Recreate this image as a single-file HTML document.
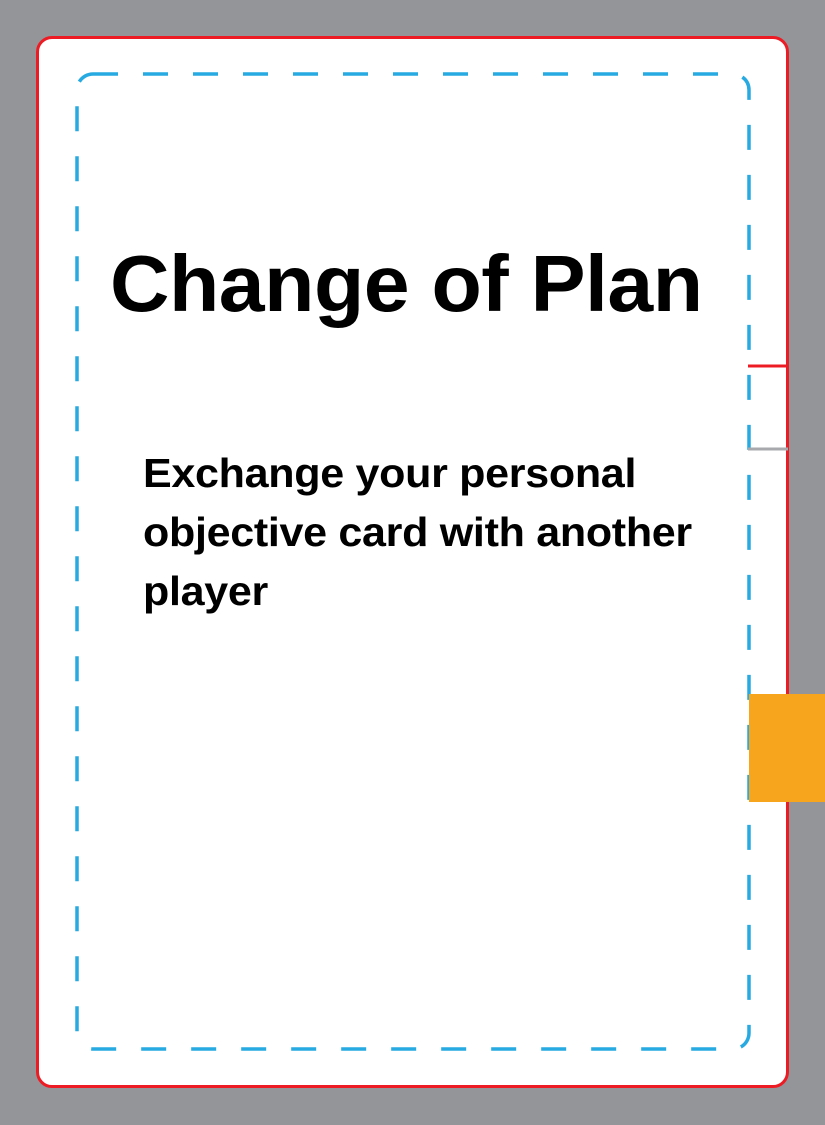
<!DOCTYPE html>
<html><head><style>
html,body{margin:0;padding:0;}
body{width:825px;height:1125px;background:#939598;position:relative;overflow:hidden;font-family:"Liberation Sans",sans-serif;}
.card{position:absolute;left:36px;top:36px;width:747px;height:1046px;background:#fff;border:3px solid #ED1C24;border-radius:16px;}
</style></head><body>
<div class="card"></div>
<svg style="position:absolute;left:0;top:0" width="825" height="1125">
<rect x="77" y="74" width="672" height="975" rx="16" fill="none" stroke="#27AAE1" stroke-width="3.5" stroke-dasharray="25 25"/>
<line x1="748" y1="366" x2="788" y2="366" stroke="#ED1C24" stroke-width="3"/>
<line x1="748" y1="449" x2="788" y2="449" stroke="#A7A9AC" stroke-width="3"/>
<rect x="749" y="694" width="76" height="108" fill="#F7A51C"/>
</svg>
<div style="position:absolute;left:110px;top:238px;font-size:80px;line-height:92px;font-weight:bold;white-space:nowrap;transform:scaleX(1.03);transform-origin:0 0;letter-spacing:-0.5px;">Change of Plan</div>
<div style="position:absolute;left:143px;top:444px;font-size:41px;line-height:59px;font-weight:bold;white-space:nowrap;transform:scaleX(1.05);transform-origin:0 0;letter-spacing:-0.3px;">Exchange your personal<br>objective card with another<br>player</div>
</body></html>
